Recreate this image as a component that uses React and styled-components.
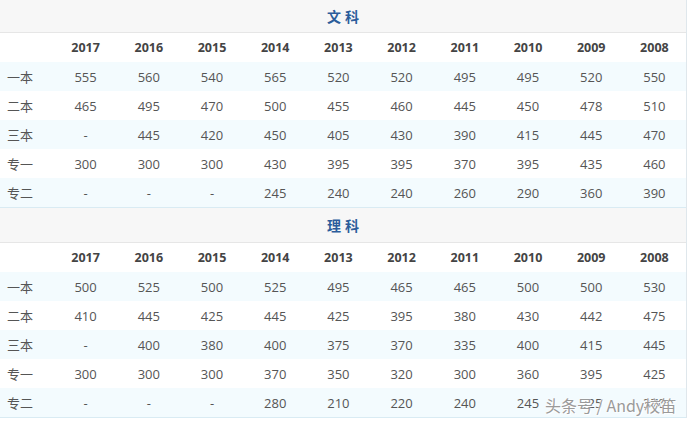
import React from 'react'
import styled, { createGlobalStyle } from 'styled-components'

const GlobalStyle = createGlobalStyle`
  html, body {
    margin: 0;
    padding: 0;
    background: #ffffff;
  }
  body {
    font-family: "Open Sans", "Noto Sans CJK SC", sans-serif;
  }
`;

//css section
const Page = styled.div`
  position: relative;
  width: 686px;
  border-right: 1px solid #dfe7ec;
  background: #fff;
`;

const Section = styled.div`
  border-bottom: 1px solid #d9ebf3;
`;

const Title = styled.div`
  height: ${(p) => p.$h}px;
  display: flex;
  align-items: center;
  justify-content: center;
  background: #f7f7f7;
  border-bottom: 1px solid #e6e6e6;
  color: #2c5d9b;
  font-family: "Noto Sans CJK SC", sans-serif;
  font-weight: 700;
  font-size: 14px;
  letter-spacing: 4px;
  padding-left: 4px;
`;

const Row = styled.div`
  display: grid;
  grid-template-columns: 54px repeat(10, 1fr);
  height: 29px;
  align-items: center;
  background: ${(p) => (p.$striped ? '#f3fbfe' : '#ffffff')};
`;

const Label = styled.div`
  padding-left: 7px;
  font-family: "Noto Sans CJK SC", sans-serif;
  font-size: 13px;
  color: #555;
`;

const Cell = styled.div`
  text-align: center;
  font-size: ${(p) => (p.$head ? '12.5px' : '13px')};
  font-weight: ${(p) => (p.$head ? 700 : 400)};
  color: ${(p) => (p.$head ? '#444' : '#555')};
`;

// watermark sits over the last row, like in the screenshot
const Watermark = styled.div`
  position: absolute;
  left: 545px;
  top: 393px;
  font-family: "Noto Sans CJK SC", sans-serif;
  font-size: 16px;
  color: #9a9a9a;
  text-shadow: 0 0 2px #fff, 0 0 2px #fff, 1px 1px 0 #fff;
  white-space: nowrap;
`;

const years = ['2017', '2016', '2015', '2014', '2013', '2012', '2011', '2010', '2009', '2008'];

const wenke = [
  ['一本', '555', '560', '540', '565', '520', '520', '495', '495', '520', '550'],
  ['二本', '465', '495', '470', '500', '455', '460', '445', '450', '478', '510'],
  ['三本', '-', '445', '420', '450', '405', '430', '390', '415', '445', '470'],
  ['专一', '300', '300', '300', '430', '395', '395', '370', '395', '435', '460'],
  ['专二', '-', '-', '-', '245', '240', '240', '260', '290', '360', '390'],
];

const like = [
  ['一本', '500', '525', '500', '525', '495', '465', '465', '500', '500', '530'],
  ['二本', '410', '445', '425', '445', '425', '395', '380', '430', '442', '475'],
  ['三本', '-', '400', '380', '400', '375', '370', '335', '400', '415', '445'],
  ['专一', '300', '300', '300', '370', '350', '320', '300', '360', '395', '425'],
  ['专二', '-', '-', '-', '280', '210', '220', '240', '245', '325', '370'],
];

const ScoreTable = ({ title, rows, titleHeight }) => (
  <Section>
    <Title $h={titleHeight}>{title}</Title>
    <Row>
      <Label />
      {years.map((y) => (
        <Cell $head key={y}>{y}</Cell>
      ))}
    </Row>
    {rows.map((r, i) => (
      <Row $striped={i % 2 === 0} key={r[0]}>
        <Label>{r[0]}</Label>
        {r.slice(1).map((v, j) => (
          <Cell key={j}>{v}</Cell>
        ))}
      </Row>
    ))}
  </Section>
);

const App = () => {
  return (
    <>
      <GlobalStyle />
      <Page>
        <ScoreTable title="文科" rows={wenke} titleHeight={32} />
        <ScoreTable title="理科" rows={like} titleHeight={34} />
        <Watermark>头条号 / Andy校笛</Watermark>
      </Page>
    </>
  );
};

export default App;
